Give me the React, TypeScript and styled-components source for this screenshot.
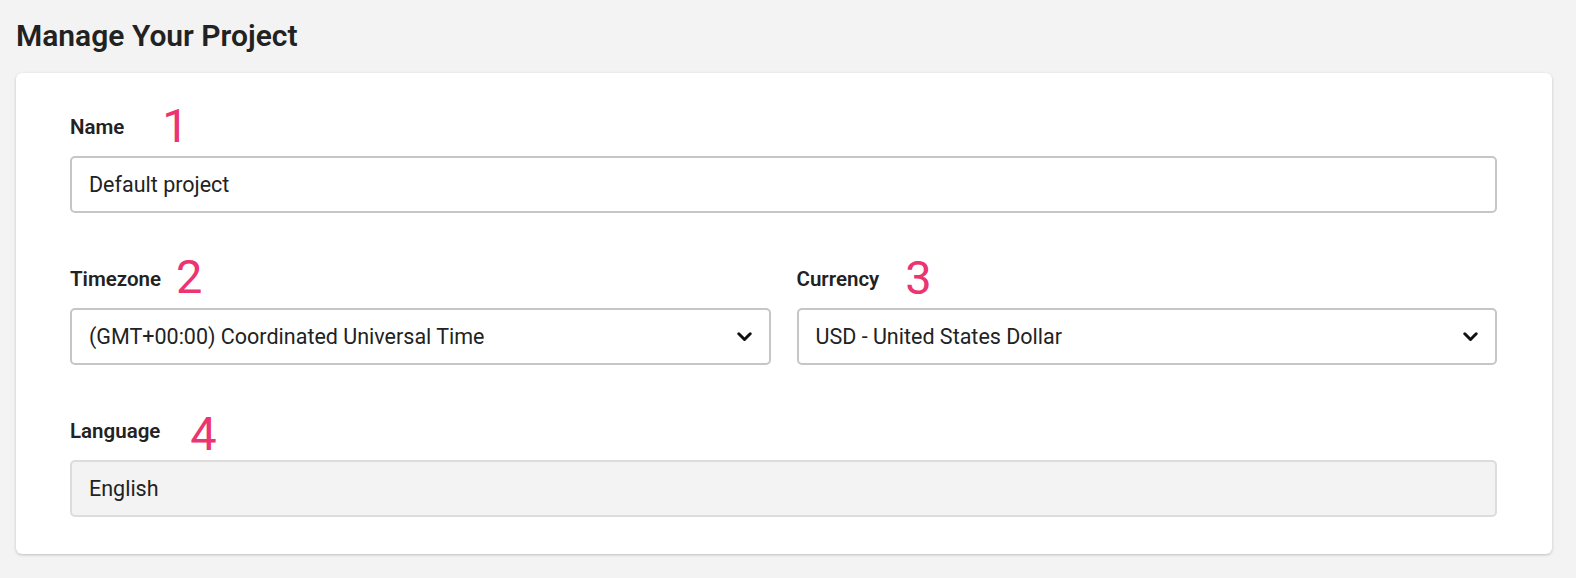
import React from "react";
import styled, { createGlobalStyle } from "styled-components";

const GlobalStyle = createGlobalStyle`
  html, body {
    margin: 0;
    padding: 0;
    background: #f3f3f3;
    font-family: Roboto, "Liberation Sans", Arial, sans-serif;
    color: #222222;
  }
  * { box-sizing: border-box; }
`;

const Page = styled.div`
  padding: 19px 24px 24px 16px;
`;

const Title = styled.h1`
  margin: 0 0 20px 0;
  font-size: 30px;
  line-height: 34px;
  font-weight: 600;
  color: #222222;
`;

const Card = styled.section`
  background: #ffffff;
  border-radius: 6px;
  box-shadow: 0 1px 3px rgba(0, 0, 0, 0.22);
  padding: 42px 55px 37px 54px;
  display: flex;
  flex-direction: column;
  gap: 54px;
`;

const Row = styled.div`
  display: grid;
  grid-template-columns: 1fr 1fr;
  column-gap: 26px;
`;

const Field = styled.div`
  display: flex;
  flex-direction: column;
  min-width: 0;
`;

const LabelRow = styled.div`
  display: block;
  height: 24px;
  line-height: 24px;
  margin-bottom: 17px;
  white-space: nowrap;
`;

const Label = styled.label`
  font-size: 20.5px;
  line-height: 24px;
  font-weight: 600;
  color: #222222;
`;

const Marker = styled.span<{ $gap: number; $drop: number }>`
  display: inline-block;
  margin-left: ${(p) => p.$gap}px;
  font-size: 47px;
  line-height: 0;
  font-weight: 400;
  color: #ec3470;
  transform: translateY(${(p) => p.$drop}px);
`;

const Box = styled.div<{ $disabled?: boolean }>`
  height: 57px;
  display: flex;
  align-items: center;
  justify-content: space-between;
  padding: 0 17px 0 17px;
  border: 2px solid ${(p) => (p.$disabled ? "#dcdcdc" : "#c6c6c6")};
  border-radius: 5px;
  background: ${(p) => (p.$disabled ? "#f3f3f3" : "#ffffff")};
  font-size: 21.5px;
  color: #222222;
`;

const Value = styled.span`
  white-space: nowrap;
`;

const Chevron = () => (
  <svg width="15" height="10" viewBox="0 0 15 10" aria-hidden="true">
    <path
      d="M1.8 1.8 L7.5 7.5 L13.2 1.8"
      fill="none"
      stroke="#111111"
      strokeWidth="3"
      strokeLinecap="round"
      strokeLinejoin="round"
    />
  </svg>
);

type FieldProps = {
  label: string;
  mark: string;
  gap: number;
  drop: number;
  value: string;
  select?: boolean;
  disabled?: boolean;
};

const FormField = ({ label, mark, gap, drop, value, select, disabled }: FieldProps) => (
  <Field>
    <LabelRow>
      <Label>{label}</Label>
      <Marker $gap={gap} $drop={drop}>
        {mark}
      </Marker>
    </LabelRow>
    <Box $disabled={disabled}>
      <Value>{value}</Value>
      {select && <Chevron />}
    </Box>
  </Field>
);

export default function App() {
  return (
    <>
      <GlobalStyle />
      <Page>
        <Title>Manage Your Project</Title>
        <Card>
          <FormField label="Name" mark="1" gap={38} drop={8} value="Default project" />
          <Row>
            <FormField
              label="Timezone"
              mark="2"
              gap={15}
              drop={7}
              value="(GMT+00:00) Coordinated Universal Time"
              select
            />
            <FormField
              label="Currency"
              mark="3"
              gap={26}
              drop={8}
              value="USD - United States Dollar"
              select
            />
          </Row>
          <FormField
            label="Language"
            mark="4"
            gap={30}
            drop={12}
            value="English"
            disabled
          />
        </Card>
      </Page>
    </>
  );
}
